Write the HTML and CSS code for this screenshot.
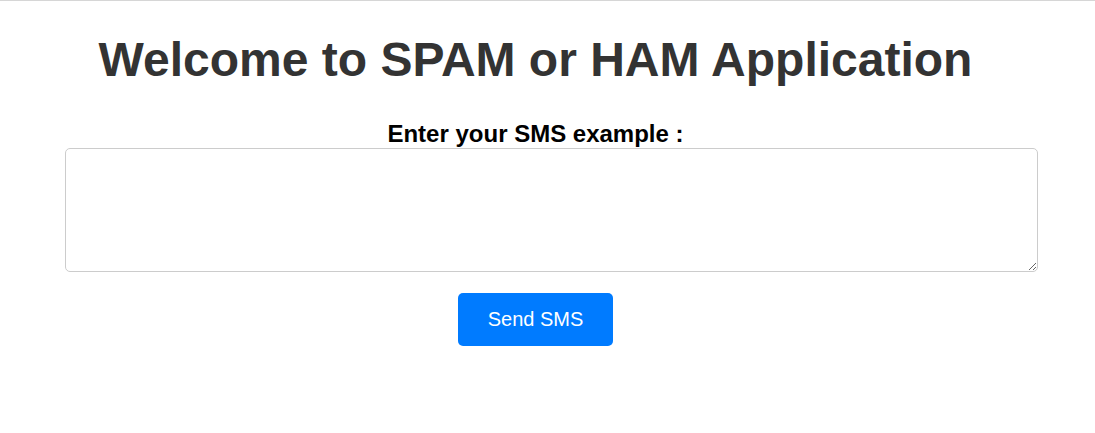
FILE: index.html
```html
<!DOCTYPE html>
<html>
<head>
<meta charset="utf-8">
<link rel="stylesheet" href="styles.css">
</head>
<body>
<div class="topline"></div>
<div class="container">
  <h1 class="title">Welcome to SPAM or HAM Application</h1>
  <form class="form">
    <label class="label" for="sms">Enter your SMS example :</label>
    <textarea class="sms" id="sms"></textarea>
    <button type="button" class="btn">Send SMS</button>
  </form>
</div>
</body>
</html>
```
FILE: styles.css
```css
html, body {
  margin: 0;
  padding: 0;
  background: #fff;
  font-family: "Liberation Sans", Arial, sans-serif;
}
.topline {
  height: 1px;
  background: #d6d6d6;
}
.container {
  width: 941px;
  margin-left: 65px;
  display: flex;
  flex-direction: column;
  align-items: center;
}
.title {
  margin: 31px 0 0;
  font-size: 48px;
  line-height: 56px;
  font-weight: bold;
  color: #333;
}
.form {
  width: 100%;
  display: flex;
  flex-direction: column;
  align-items: center;
  margin-top: 32px;
}
.label {
  font-size: 24px;
  line-height: 28px;
  font-weight: bold;
  color: #000;
}
.sms {
  align-self: flex-start;
  box-sizing: border-box;
  width: 973px;
  height: 124px;
  border: 1px solid #ccc;
  border-radius: 5px;
  margin: 0;
  padding: 10px;
  font-family: inherit;
}
.btn {
  margin-top: 21px;
  width: 155px;
  height: 53px;
  border: none;
  border-radius: 5px;
  background: #007bff;
  color: #fff;
  font-family: inherit;
  font-size: 20px;
}
```
